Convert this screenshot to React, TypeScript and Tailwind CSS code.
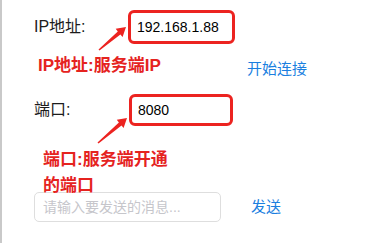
import React from 'react';

const font = { fontFamily: '"Liberation Sans", "Noto Sans CJK SC", sans-serif' };

const Callout: React.FC<{ children: React.ReactNode; className?: string }> = ({ children, className }) => (
  <div
    className={`relative z-10 font-bold text-[17px] text-[#e5231f] [text-shadow:0_0_2px_#fff,0_0_1px_#fff] ${className ?? ''}`}
  >
    {children}
  </div>
);

const App: React.FC = () => {
  return (
    <div className="relative w-[376px] h-[243px] bg-white border-l-2 border-[#c9c9c9] overflow-hidden" style={font}>
      <div className="flex flex-col pl-[32px]">
        {/* IP row */}
        <div className="flex items-center mt-[10px]">
          <span className="w-[94px] text-[16px] text-[#1c1c1c]">IP地址:</span>
          <div className="w-[107px] h-[34px] flex items-center pl-[6px] border-[3px] border-[#ec2320] rounded-[6px] text-[14px] text-black">
            192.168.1.88
          </div>
        </div>

        <div className="flex items-center mt-[12px] h-[20px]">
          <Callout className="w-[213px] pl-[4px] leading-[20px]">IP地址:服务端IP</Callout>
          <span className="text-[15px] text-[#1b7fdf] mt-[6px]">开始连接</span>
        </div>

        {/* Port row */}
        <div className="flex items-center mt-[18px]">
          <span className="w-[95px] text-[16px] text-[#1c1c1c]">端口:</span>
          <div className="w-[104px] h-[32px] flex items-center pl-[6px] border-[3px] border-[#ec2320] rounded-[6px] text-[14px] text-black">
            8080
          </div>
        </div>

        <Callout className="mt-[21px] pl-[9px] leading-[26px]">
          端口:服务端开通
          <br />
          的端口
        </Callout>

        {/* Send row */}
        <div className="flex items-center mt-[-7px]">
          <div className="w-[187px] h-[30px] flex items-center pl-[8px] border border-[#dedede] rounded-[5px] text-[14px] text-[#c6c6cb]">
            请输入要发送的消息...
          </div>
          <span className="ml-[30px] text-[15px] text-[#1b7fdf]">发送</span>
        </div>
      </div>

      {/* annotation arrows */}
      <svg className="absolute inset-0 pointer-events-none" width="376" height="243" viewBox="-2 0 376 243">
        <polygon
          fill="#ec2320"
          points="95.5,50.6 116.4,34.4 118.6,37 122,27 111.7,28.8 113.8,31.4 94.5,49.4"
        />
        <polygon
          fill="#ec2320"
          points="94.5,143.6 117.5,125.4 119.6,128 123,118 112.8,119.8 114.9,122.4 93.5,142.4"
        />
      </svg>
    </div>
  );
};

export default App;
